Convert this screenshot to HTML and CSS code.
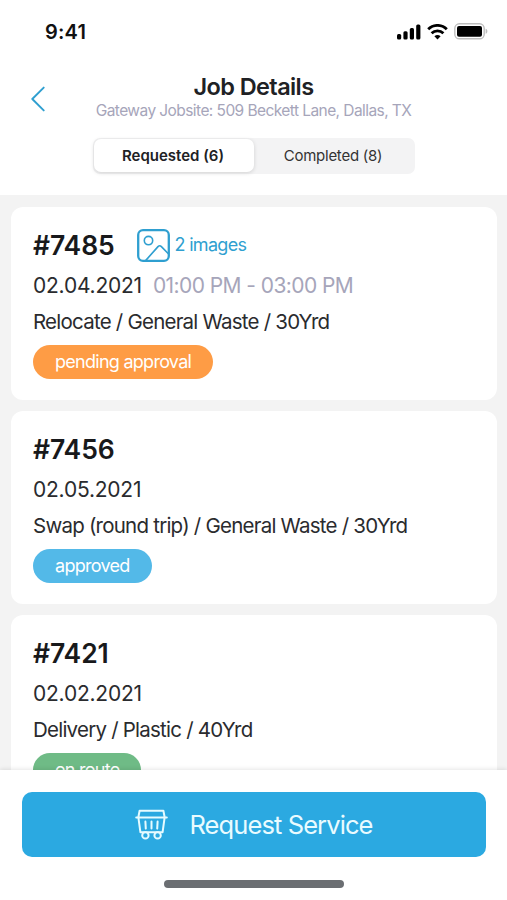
FILE: index.html
```html
<!DOCTYPE html>
<html lang="en">
<head>
<meta charset="utf-8">
<meta name="viewport" content="width=device-width, initial-scale=1">
<title>Job Details</title>
<link rel="stylesheet" href="styles.css">
</head>
<body>
<div class="screen">
  <header class="header">
    <div class="status">
      <span class="clock">9:41</span>
      <div class="indicators">
        <svg width="24" height="16" viewBox="0 0 24 16"><rect x="0" y="10" width="4.2" height="5.4" rx="1.5"/><rect x="6.4" y="7.3" width="4.2" height="8.1" rx="1.5"/><rect x="12.8" y="4" width="4.2" height="11.4" rx="1.5"/><rect x="19.2" y="0.6" width="4.2" height="14.8" rx="1.5"/></svg>
        <svg class="wifi" width="21" height="16" viewBox="0 0 21 16" fill="none" stroke="#000" stroke-width="2.8"><path d="M1.2 5.2a13.2 13.2 0 0 1 18.6 0M4.6 9.2a8.4 8.4 0 0 1 11.8 0"/><path d="M10.5 15.4 7.4 12.3a4.6 4.6 0 0 1 6.2 0z" fill="#000" stroke="none"/></svg>
        <svg class="battery" width="34" height="17" viewBox="0 0 34 17"><rect x="0.8" y="0.8" width="29.4" height="15" rx="4.6" fill="none" stroke="#bdbdbd" stroke-width="1.4"/><rect x="3" y="3" width="25" height="10.8" rx="2"/><path d="M31.6 5.8c2.4.6 2.4 4.4 0 5z" fill="#bdbdbd"/></svg>
      </div>
    </div>
    <div class="titlebar">
      <svg class="back" width="14" height="26" viewBox="0 0 14 26" fill="none" stroke="#2f9fd0" stroke-width="1.9" stroke-linecap="round" stroke-linejoin="round"><path d="M12.7 1.6 1.3 13l11.4 11.4"/></svg>
      <div class="titles">
        <h1>Job Details</h1>
        <p class="site">Gateway Jobsite: 509 Beckett Lane, Dallas, TX</p>
      </div>
    </div>
    <div class="tabs">
      <div class="tab active"><span>Requested (6)</span></div>
      <div class="tab"><span>Completed (8)</span></div>
    </div>
  </header>

  <main class="list">
    <article class="card">
      <div class="top">
        <h2>#7485</h2>
        <div class="images">
          <svg width="33" height="33" viewBox="0 0 33 33" fill="none" stroke="#2f9fd0" stroke-linejoin="round"><rect x="1.2" y="1.2" width="30.6" height="30.6" rx="4.8" stroke-width="2.3"/><circle cx="11.5" cy="11.6" r="4.2" stroke-width="1.6"/><path d="M8.6 31.6 21 17.6q1.7-1.8 3.4 0l7.2 7.4" stroke-width="1.6"/></svg>
          <span>2 images</span>
        </div>
      </div>
      <div class="when"><span class="date">02.04.2021</span><span class="time">01:00 PM - 03:00 PM</span></div>
      <p class="desc">Relocate / General Waste / 30Yrd</p>
      <span class="pill pending">pending approval</span>
    </article>
    <article class="card">
      <div class="top"><h2>#7456</h2></div>
      <div class="when"><span class="date">02.05.2021</span></div>
      <p class="desc">Swap (round trip) / General Waste / 30Yrd</p>
      <span class="pill approved">approved</span>
    </article>
    <article class="card">
      <div class="top"><h2>#7421</h2></div>
      <div class="when"><span class="date">02.02.2021</span></div>
      <p class="desc">Delivery / Plastic / 40Yrd</p>
      <span class="pill route">en route</span>
    </article>
  </main>

  <footer class="footer">
    <button class="request">
      <svg width="33" height="31" viewBox="0 0 33 31" fill="none" stroke="#e6fbff" stroke-width="2" stroke-linecap="round" stroke-linejoin="round"><path d="M3.4 8 4.6 1.8h23.8L29.6 8M1.2 8.4h30.6M3.4 8.6l2 14.6h22.2l2-14.6M10.4 12.6l.4 7M16.5 12.6v7M22.6 12.6l-.4 7"/><circle cx="10.4" cy="26.4" r="3.2" fill="#2ba9e1"/><circle cx="22.6" cy="26.4" r="3.2" fill="#2ba9e1"/></svg>
      <span>Request Service</span>
    </button>
    <div class="home"></div>
  </footer>
</div>
</body>
</html>
```
FILE: styles.css
```css
* { box-sizing: border-box; }
body, h1, h2, p { margin: 0; }
body {
  font-family: Inter, "Liberation Sans", sans-serif;
  color: #2a2b2e;
  background: #fff;
}
.screen {
  display: flex;
  flex-direction: column;
  width: 100%;
  height: 900px;
  overflow: hidden;
}
.header {
  flex: 0 0 195px;
  background: #fff;
}
.status {
  display: flex;
  justify-content: space-between;
  align-items: center;
  height: 63px;
  padding: 0 19px 0 45px;
}
.clock {
  font-size: 20px;
  font-weight: 600;
  letter-spacing: 0.2px;
  color: #111;
}
.indicators { display: flex; align-items: center; }
.wifi { margin-left: 6px; }
.battery { margin-left: 6px; }
.titlebar {
  display: grid;
  grid-template-columns: 14px 1fr 14px;
  align-items: center;
  height: 75px;
  padding: 0 33px 0 31px;
}
.back { margin-bottom: 3px; }
.titles { text-align: center; white-space: nowrap; padding: 0 0 7px 2px; }
h1 {
  font-size: 23.5px;
  line-height: 26px;
  font-weight: 600;
  letter-spacing: -0.6px;
  color: #202124;
}
.site {
  font-size: 15.5px;
  line-height: 21px;
  font-weight: 400;
  letter-spacing: -0.57px;
  color: #a6a5ba;
}
.tabs {
  display: flex;
  width: 322px;
  height: 36px;
  margin-left: 93px;
  background: #f3f3f4;
  border-radius: 7px;
}
.tab {
  flex: 1;
  display: flex;
  align-items: center;
  justify-content: center;
  padding: 0 3px 1px 0;
  font-size: 15px;
  letter-spacing: -0.25px;
  color: #333;
}
.tab.active {
  background: #fff;
  border-radius: 7px;
  margin: 1px 0 2px 1px;
  padding: 0 2px 0 0;
  font-weight: 600;
  letter-spacing: 0;
  color: #202124;
  box-shadow: 0 1px 4px rgba(0, 0, 0, 0.14);
}
.list {
  flex: 1;
  min-height: 0;
  overflow: hidden;
  display: flex;
  flex-direction: column;
  gap: 11px;
  padding: 12px 10px 0 11px;
  background: #f3f3f3;
}
.card {
  flex: 0 0 193px;
  background: #fff;
  border-radius: 12px;
  padding: 20px 22px 0;
}
.top { display: flex; align-items: center; height: 36px; }
h2 {
  font-size: 26.5px;
  font-weight: 600;
  letter-spacing: -0.1px;
  color: #18191b;
}
.images {
  display: flex;
  align-items: center;
  gap: 5px;
  margin-left: 22px;
  font-size: 18px;
  letter-spacing: -0.7px;
  color: #2f9fd0;
}
.images span { padding-bottom: 2px; }
.when {
  display: flex;
  align-items: center;
  gap: 11px;
  height: 36px;
  margin-top: 4px;
  font-size: 21px;
}
.date { letter-spacing: -0.22px; }
.time { letter-spacing: -0.57px; color: #a6a5ba; }
.desc {
  font-size: 20.5px;
  line-height: 37px;
  letter-spacing: -0.77px;
  white-space: nowrap;
}
.pill {
  display: inline-flex;
  align-items: center;
  height: 34px;
  margin-top: 5px;
  padding: 0 22px 2px;
  border-radius: 17px;
  font-size: 18px;
  letter-spacing: -0.73px;
  color: #fff;
}
.pending { background: #fe9c45; }
.approved { background: #53b9e8; }
.route { background: #6fbb86; }
.footer {
  flex: 0 0 130px;
  position: relative;
  padding: 22px 21px 0 22px;
  background: #fff;
  box-shadow: 0 -1px 4px rgba(0, 0, 0, 0.1);
}
.request {
  display: flex;
  align-items: center;
  justify-content: center;
  gap: 21px;
  width: 100%;
  height: 65px;
  padding: 0;
  border: 0;
  border-radius: 10px;
  background: #2ba9e1;
  color: #e9fbff;
  font: 400 25.5px Inter, "Liberation Sans", sans-serif;
  letter-spacing: -0.9px;
}
.home {
  width: 180px;
  height: 8px;
  margin: 23px auto 0;
  border-radius: 4px;
  background: #6b6e72;
}
```
